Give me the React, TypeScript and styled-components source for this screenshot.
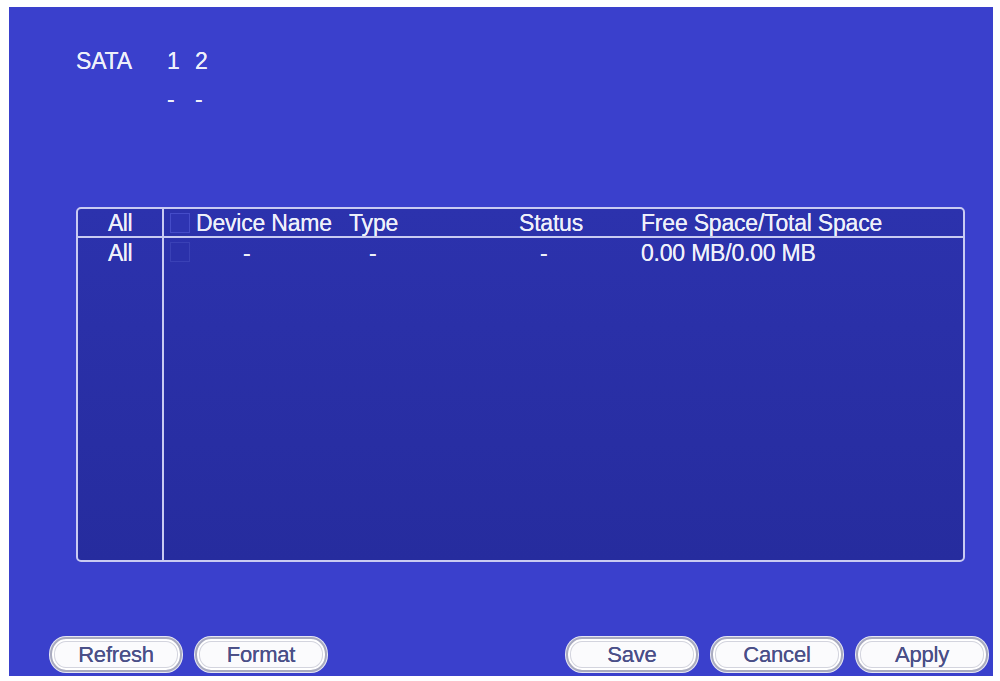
import React from 'react';
import styled, { createGlobalStyle } from 'styled-components';

const GlobalStyle = createGlobalStyle`
    body {
        margin: 0;
        background: #ffffff;
        font-family: "Liberation Sans", Arial, sans-serif;
    }
`;

const Panel = styled.main`
    box-sizing: border-box;
    width: 984px;
    height: 669px;
    margin: 7px 0 0 9px;
    background: #3a40cc;
    display: flex;
    flex-direction: column;
    color: #eef0fa;
    font-size: 23px;
    text-shadow: 0 0 0.6px #eef0fa;
`;

const DiskInfo = styled.section`
    padding: 40px 0 0 67px;
    display: grid;
    grid-template-columns: 91px 28px 28px;
    grid-template-rows: 28px 28px;
    row-gap: 10px;
    line-height: 28px;
`;

const Label = styled.span`
    letter-spacing: -0.2px;
`;

const Table = styled.div`
    box-sizing: border-box;
    margin: 94px 0 0 67px;
    width: 889px;
    height: 355px;
    border: 2px solid #c9cbf2;
    border-radius: 5px;
    background: linear-gradient(#2c32ad, #262c9e);
    display: grid;
    grid-template-columns: 86px 1fr;
    grid-template-rows: 29px 1fr;
    overflow: hidden;
`;

const AllCell = styled.div<{ $head?: boolean }>`
    border-right: 2px solid #c9cbf2;
    border-bottom: ${p => (p.$head ? '2px solid #c9cbf2' : 'none')};
    text-align: center;
    line-height: ${p => (p.$head ? '29px' : '28px')};
    padding-top: ${p => (p.$head ? '0' : '1px')};
    letter-spacing: -0.5px;
`;

const Row = styled.div<{ $head?: boolean }>`
    display: grid;
    grid-template-columns: 32px 153px 170px 122px 1fr;
    align-items: ${p => (p.$head ? 'center' : 'start')};
    align-content: start;
    border-bottom: ${p => (p.$head ? '2px solid #c9cbf2' : 'none')};
    line-height: 28px;
    padding-top: ${p => (p.$head ? '0' : '1px')};
`;

const Check = styled.span<{ $faint?: boolean }>`
    box-sizing: border-box;
    display: block;
    width: 20px;
    height: 20px;
    margin: ${p => (p.$faint ? '3px' : '0')} 0 0 6px;
    border: 1px solid ${p => (p.$faint ? '#3a41b6' : '#454cc8')};
    background: ${p => (p.$faint ? '#2b31aa' : '#2e34b2')};
`;

const Cell = styled.span<{ $indent?: number }>`
    padding-left: ${p => p.$indent ?? 0}px;
    white-space: nowrap;
    letter-spacing: -0.2px;
`;

const Buttons = styled.footer`
    margin: 75px 0 0 41px;
    display: flex;
    width: 938px;
`;

const Button = styled.button<{ $push?: boolean }>`
    box-sizing: border-box;
    width: 132px;
    height: 35px;
    margin-left: ${p => (p.$push ? 'auto' : '0')};
    margin-right: 13px;
    border: 2px solid #a9abbf;
    border-radius: 16px / 17px;
    background: #fbfbfd;
    box-shadow: 0 0 0 1px #e6e7f2, inset 0 0 0 2px #ffffff, inset 0 0 0 3px #d3d4de;
    color: #4a4f88;
    font-family: "Liberation Sans", Arial, sans-serif;
    font-size: 22px;
    letter-spacing: -0.2px;
    text-shadow: 0 0 0.5px #4a4f88;
    padding: 0;
    &:last-child {
        margin-right: 0;
    }
`;

const App: React.FC = () => {
    return (
        <>
            <GlobalStyle />
            <Panel>
                <DiskInfo>
                    <Label>SATA</Label>
                    <span>1</span>
                    <span>2</span>
                    <span />
                    <span>-</span>
                    <span>-</span>
                </DiskInfo>
                <Table>
                    <AllCell $head>All</AllCell>
                    <Row $head>
                        <Check />
                        <Cell>Device Name</Cell>
                        <Cell>Type</Cell>
                        <Cell>Status</Cell>
                        <Cell>Free Space/Total Space</Cell>
                    </Row>
                    <AllCell>All</AllCell>
                    <Row>
                        <Check $faint />
                        <Cell $indent={47}>-</Cell>
                        <Cell $indent={20}>-</Cell>
                        <Cell $indent={21}>-</Cell>
                        <Cell>0.00 MB/0.00 MB</Cell>
                    </Row>
                </Table>
                <Buttons>
                    <Button>Refresh</Button>
                    <Button>Format</Button>
                    <Button $push>Save</Button>
                    <Button>Cancel</Button>
                    <Button>Apply</Button>
                </Buttons>
            </Panel>
        </>
    );
};

export default App;
